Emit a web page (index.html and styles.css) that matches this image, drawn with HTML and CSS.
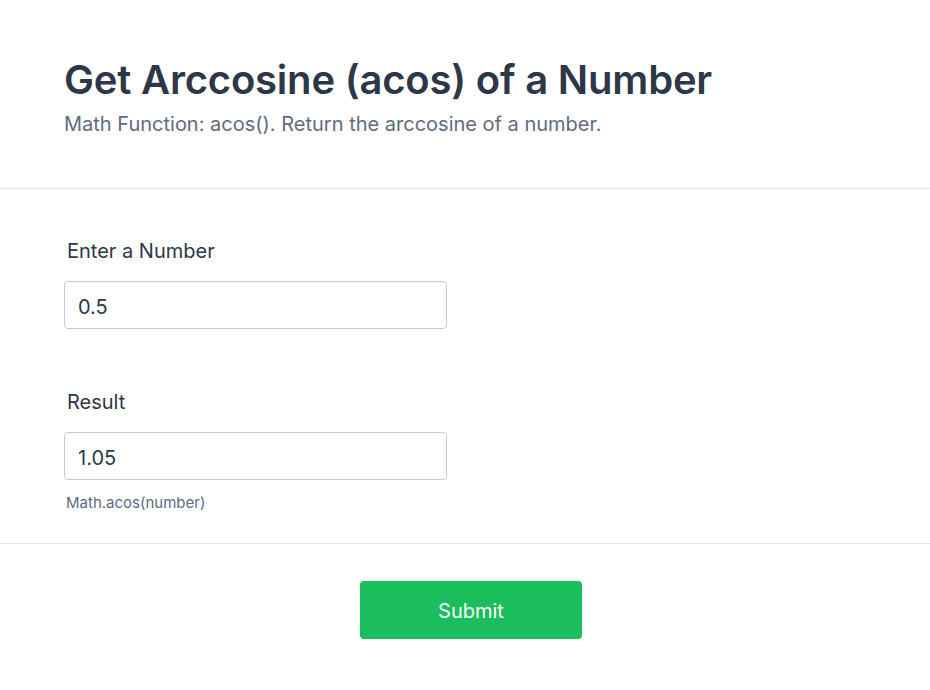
FILE: index.html
```html
<!DOCTYPE html>
<html lang="en">
<head>
<meta charset="utf-8">
<title>Get Arccosine (acos) of a Number</title>
<link rel="stylesheet" href="styles.css">
</head>
<body>
<div class="page">
  <header class="header">
    <h1 class="title">Get Arccosine (acos) of a Number</h1>
    <p class="subtitle">Math Function: acos(). Return the arccosine of a number.</p>
  </header>
  <form class="form">
    <div class="field">
      <label class="label" for="num">Enter a Number</label>
      <input class="input" id="num" type="text" value="0.5">
    </div>
    <div class="field field-result">
      <label class="label" for="res">Result</label>
      <input class="input" id="res" type="text" value="1.05">
      <p class="help">Math.acos(number)</p>
    </div>
  </form>
  <div class="footer">
    <button class="submit" type="button">Submit</button>
  </div>
</div>
</body>
</html>
```

FILE: styles.css
```css
* { box-sizing: border-box; }
html, body {
  margin: 0;
  padding: 0;
  background: #ffffff;
}
body {
  font-family: Inter, "Noto Sans", "Liberation Sans", sans-serif;
  color: #2d3748;
}
.page {
  width: 930px;
  min-height: 690px;
  display: flex;
  flex-direction: column;
}
.header {
  padding: 56px 64px 50px;
  border-bottom: 1px solid #dbe0e8;
}
.title {
  margin: 0;
  font-size: 40px;
  line-height: 48px;
  font-weight: 600;
  letter-spacing: -0.2px;
  color: #2d3748;
}
.subtitle {
  margin: 6px 0 0;
  font-size: 20px;
  line-height: 28px;
  color: #5f6b80;
}
.form {
  padding: 48px 64px 30px;
  border-bottom: 1px solid #e8e8ec;
  display: flex;
  flex-direction: column;
  gap: 59px;
}
.field {
  display: flex;
  flex-direction: column;
  align-items: flex-start;
}
.label {
  padding-left: 3px;
  font-size: 20px;
  line-height: 28px;
  font-weight: 400;
  color: #2d3748;
  margin-bottom: 16px;
}
.input {
  width: 383px;
  height: 48px;
  padding: 3px 13px 0;
  border: 1px solid #c4c9d4;
  border-radius: 4px;
  font-family: inherit;
  font-size: 20px;
  color: #2d3748;
  background: #ffffff;
  outline: none;
}
.help {
  margin: 13px 0 0;
  padding-left: 2px;
  font-size: 15px;
  line-height: 20px;
  color: #5f6b80;
}
.footer {
  padding: 37px 0 0 12px;
  display: flex;
  justify-content: center;
}
.submit {
  width: 222px;
  height: 58px;
  padding: 2px 0 0;
  border: none;
  border-radius: 4px;
  background: #1abe5c;
  color: #ffffff;
  font-family: inherit;
  font-size: 20px;
  font-weight: 400;
  cursor: pointer;
}
```
